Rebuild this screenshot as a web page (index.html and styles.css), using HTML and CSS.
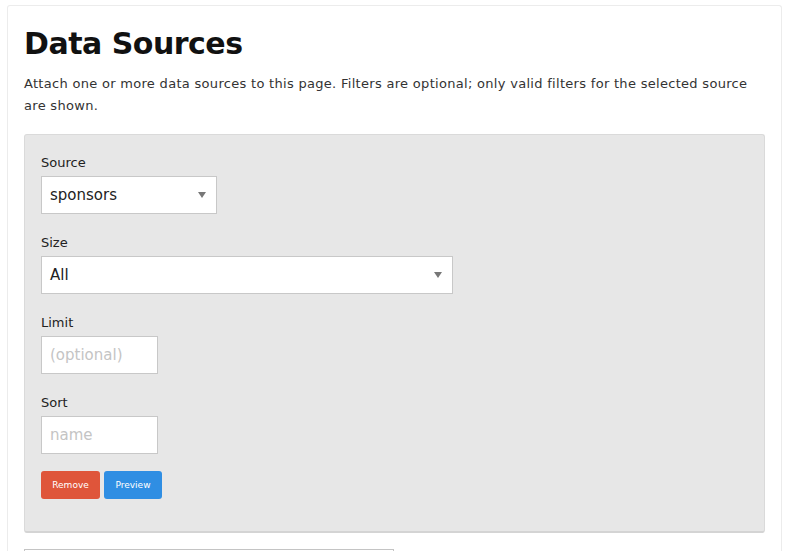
FILE: index.html
```html
<!DOCTYPE html>
<html lang="en">
<head>
    <meta charset="UTF-8">
    <meta name="viewport" content="width=device-width, initial-scale=1.0">
    <title>Data Sources</title>
    <link rel="stylesheet" href="styles.css">
</head>
<body>
    <div class="page-card">
        <h1 class="page-title">Data Sources</h1>
        <p class="page-intro">Attach one or more data sources to this page. Filters are optional; only valid filters for the selected source are shown.</p>

        <!-- One data source block -->
        <div class="source-panel">
            <div class="field">
                <label class="field-label">Source</label>
                <div class="select-box select-short">
                    <span>sponsors</span>
                    <span class="caret"></span>
                </div>
            </div>
            <div class="field">
                <label class="field-label">Size</label>
                <div class="select-box select-wide">
                    <span>All</span>
                    <span class="caret"></span>
                </div>
            </div>
            <div class="field">
                <label class="field-label">Limit</label>
                <input class="text-input" type="text" placeholder="(optional)">
            </div>
            <div class="field">
                <label class="field-label">Sort</label>
                <input class="text-input" type="text" placeholder="name">
            </div>
            <div class="button-row">
                <button class="btn btn-remove">Remove</button>
                <button class="btn btn-preview">Preview</button>
            </div>
        </div>

        <div class="add-source"></div>
    </div>
</body>
</html>
```

FILE: styles.css
```css
body {
    margin: 0;
    background-color: #fff;
    font-family: "DejaVu Sans", "Open Sans", sans-serif;
    color: #222;
}
.page-card {
    margin: 5px 6px 0 7px;
    padding: 10px 16px 0 16px;
    border: 1px solid #ececec;
    border-bottom: none;
    border-radius: 3px 3px 0 0;
    height: 560px;
    box-sizing: border-box;
}
.page-title {
    font-size: 30px;
    font-weight: bold;
    margin: 8px 0 9px 0;
    color: #111;
    line-height: 40px;
    letter-spacing: -0.5px;
}
.page-intro {
    font-size: 13px;
    line-height: 22px;
    margin: 0 0 17px 0;
    color: #333;
    letter-spacing: 0.3px;
}
.source-panel {
    background-color: #e7e7e7;
    border: 1px solid #dadada;
    border-bottom: 2px solid #d4d4d4;
    border-radius: 3px;
    padding: 18px 16px 32px 16px;
}
.field {
    display: flex;
    flex-direction: column;
    align-items: flex-start;
    margin-bottom: 19px;
}
.field-label {
    font-size: 13px;
    line-height: 20px;
    color: #222;
    margin-bottom: 3px;
}
.select-box {
    background: #fff;
    border: 1px solid #c8c8c8;
    height: 38px;
    box-sizing: border-box;
    display: flex;
    align-items: center;
    justify-content: space-between;
    padding: 0 10px 0 8px;
    font-size: 15px;
    color: #222;
}
.select-short {
    width: 176px;
}
.select-wide {
    width: 412px;
}
.caret {
    width: 0;
    height: 0;
    border-left: 4px solid transparent;
    border-right: 4px solid transparent;
    border-top: 6px solid #777;
}
.text-input {
    width: 117px;
    height: 38px;
    box-sizing: border-box;
    border: 1px solid #c8c8c8;
    padding: 0 8px;
    font-family: inherit;
    font-size: 15px;
    background: #fff;
}
.text-input::placeholder {
    color: #c4c4c4;
}
.button-row {
    display: flex;
    gap: 4px;
    margin-top: -2px;
}
.btn {
    border: none;
    border-radius: 3px;
    color: #fff;
    font-family: inherit;
    font-size: 9px;
    height: 28px;
    padding: 0 10px;
    cursor: pointer;
}
.btn-remove {
    background-color: #df553a;
    width: 59px;
}
.btn-preview {
    background-color: #2f8ee3;
    width: 58px;
}
.add-source {
    margin-top: 16px;
    width: 368px;
    height: 30px;
    border: 1px solid #c4c4c4;
    border-bottom: none;
}
```
